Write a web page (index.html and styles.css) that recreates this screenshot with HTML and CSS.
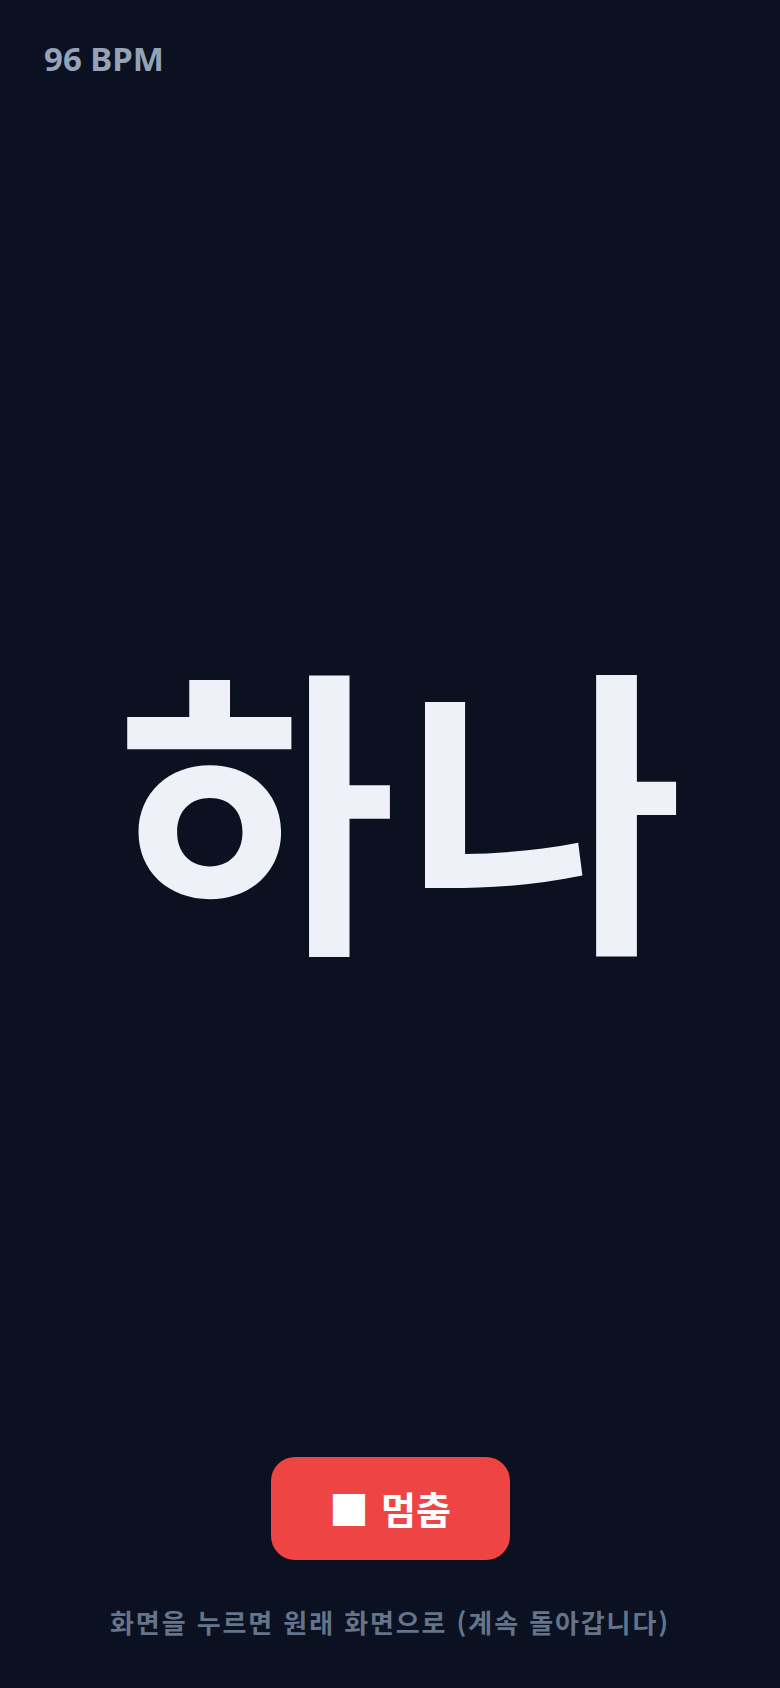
FILE: index.html
```html
<!DOCTYPE html>
<html lang="ko">
<head>
<meta charset="utf-8">
<title>메트로놈</title>
<link rel="stylesheet" href="styles.css">
</head>
<body>
<div class="screen">
  <header class="top">
    <span class="bpm">96 BPM</span>
  </header>
  <main class="stage">
    <div class="count">하나</div>
  </main>
  <footer class="bottom">
    <button class="stop" type="button"><span class="sq">■</span><span class="stop-label">멈춤</span></button>
    <p class="hint">화면을 누르면 원래 화면으로 (계속 돌아갑니다)</p>
  </footer>
</div>
</body>
</html>
```

FILE: styles.css
```css
html, body {
  margin: 0;
  padding: 0;
  background: #0b1120;
}
body {
  font-family: "Noto Sans", "Noto Sans CJK KR", sans-serif;
}
.screen {
  height: 1688px;
  display: flex;
  flex-direction: column;
  box-sizing: border-box;
}
.top {
  padding: 37px 44px 0;
}
.bpm {
  font-size: 33px;
  font-weight: 700;
  color: #94a3b8;
  line-height: 1.362;
}
.stage {
  flex: 1;
  display: flex;
  align-items: center;
  justify-content: center;
  padding: 58px 0 0 28px;
}
.count {
  font-family: "Noto Sans CJK KR", sans-serif;
  font-size: 304px;
  font-weight: 700;
  letter-spacing: 8px;
  color: #eef2f8;
  line-height: 1;
}
.bottom {
  display: flex;
  flex-direction: column;
  align-items: center;
  gap: 44px;
  padding-bottom: 48px;
}
.stop {
  width: 239px;
  height: 103px;
  border: none;
  border-radius: 24px;
  background: #ef4444;
  color: #ffffff;
  display: flex;
  align-items: center;
  justify-content: center;
  gap: 12px;
  font-family: "Noto Sans CJK KR", sans-serif;
  font-weight: 700;
  font-size: 38px;
  padding: 0;
}
.sq {
  font-size: 40px;
  line-height: 1;
}
.stop-label {
  line-height: 1;
}
.hint {
  margin: 0;
  font-family: "Noto Sans CJK KR", sans-serif;
  font-size: 26px;
  font-weight: 700;
  letter-spacing: 1.9px;
  color: #64748b;
  line-height: 1.4;
}
```
